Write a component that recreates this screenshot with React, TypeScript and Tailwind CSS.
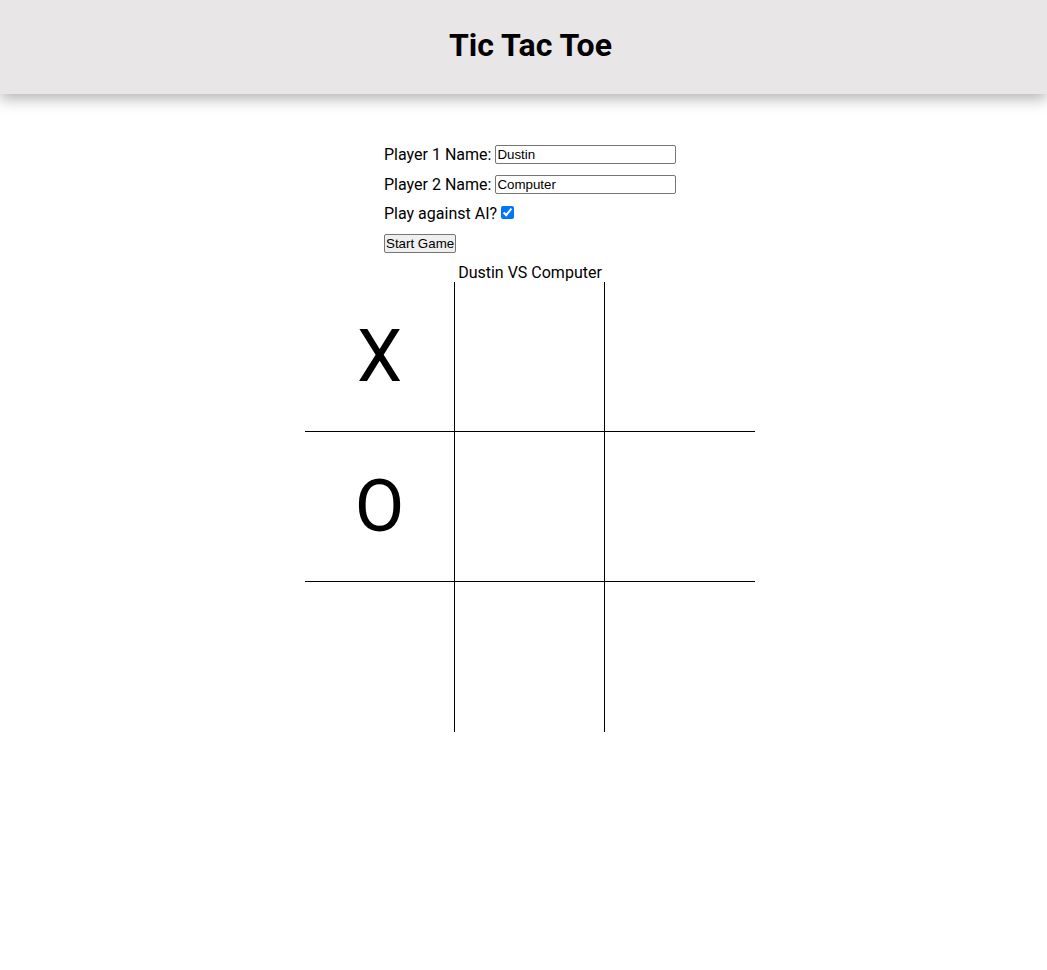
import React, { useState } from "react";

type Mark = "X" | "O" | "";

const cellBorders = [
  "border-r border-b",
  "border-r border-b",
  "border-b",
  "border-r border-b",
  "border-r border-b",
  "border-b",
  "border-r",
  "border-r",
  "",
];

const App: React.FC = () => {
  const [player1, setPlayer1] = useState("Dustin");
  const [player2, setPlayer2] = useState("Computer");
  const [vsAi, setVsAi] = useState(true);
  const [board] = useState<Mark[]>(["X", "", "", "O", "", "", "", "", ""]);

  return (
    <div className="min-h-[970px] bg-white text-black font-['Roboto',sans-serif]">
      <header className="h-[94px] bg-[#e8e6e7] shadow-[0_5px_14px_rgba(0,0,0,0.3)] flex items-center justify-center pl-[14px]">
        <h1 className="text-[32px] font-bold leading-none -mt-[4px]">Tic Tac Toe</h1>
      </header>

      <main className="flex flex-col items-center pl-[13px] pt-[50px]">
        <form
          className="w-[292px] flex flex-col gap-[9px] text-[16px] whitespace-nowrap"
          onSubmit={(e) => e.preventDefault()}
        >
          <div className="flex items-center h-[21px]">
            <label htmlFor="p1" className="shrink-0">Player 1 Name:</label>
            <input
              id="p1"
              value={player1}
              onChange={(e) => setPlayer1(e.target.value)}
              className="ml-[4px] shrink-0 w-[181px] h-[19px] border border-[#767676] rounded-[2px] px-[1px] text-[13.33px] font-['Arial',sans-serif] bg-white"
            />
          </div>
          <div className="flex items-center h-[21px]">
            <label htmlFor="p2" className="shrink-0">Player 2 Name:</label>
            <input
              id="p2"
              value={player2}
              onChange={(e) => setPlayer2(e.target.value)}
              className="ml-[4px] shrink-0 w-[181px] h-[19px] border border-[#767676] rounded-[2px] px-[1px] text-[13.33px] font-['Arial',sans-serif] bg-white"
            />
          </div>
          <div className="flex items-center h-[21px] -mt-[1px] mb-[1px]">
            <label htmlFor="ai" className="shrink-0">Play against AI?</label>
            <input
              id="ai"
              type="checkbox"
              checked={vsAi}
              onChange={(e) => setVsAi(e.target.checked)}
              className="ml-[4px] mb-[3px] w-[13px] h-[13px] accent-[#0075ff]"
            />
          </div>
          <div className="flex items-start h-[21px]">
            <button
              type="submit"
              className="h-[19px] px-[1px] bg-[#efefef] border border-[#767676] rounded-[2px] text-[13.33px] leading-none font-['Arial',sans-serif]"
            >
              Start Game
            </button>
          </div>
        </form>

        <div className="mt-[8px] text-[16px] leading-[19px] h-[19px]">
          {player1} VS {player2}
        </div>

        <div className="grid grid-cols-[150px_150px_150px] grid-rows-[150px_150px_150px]">
          {board.map((mark, i) => (
            <div
              key={i}
              className={`${cellBorders[i]} border-black flex items-center justify-center text-[72px] leading-none`}
            >
              {mark}
            </div>
          ))}
        </div>
      </main>
    </div>
  );
};

export default App;
